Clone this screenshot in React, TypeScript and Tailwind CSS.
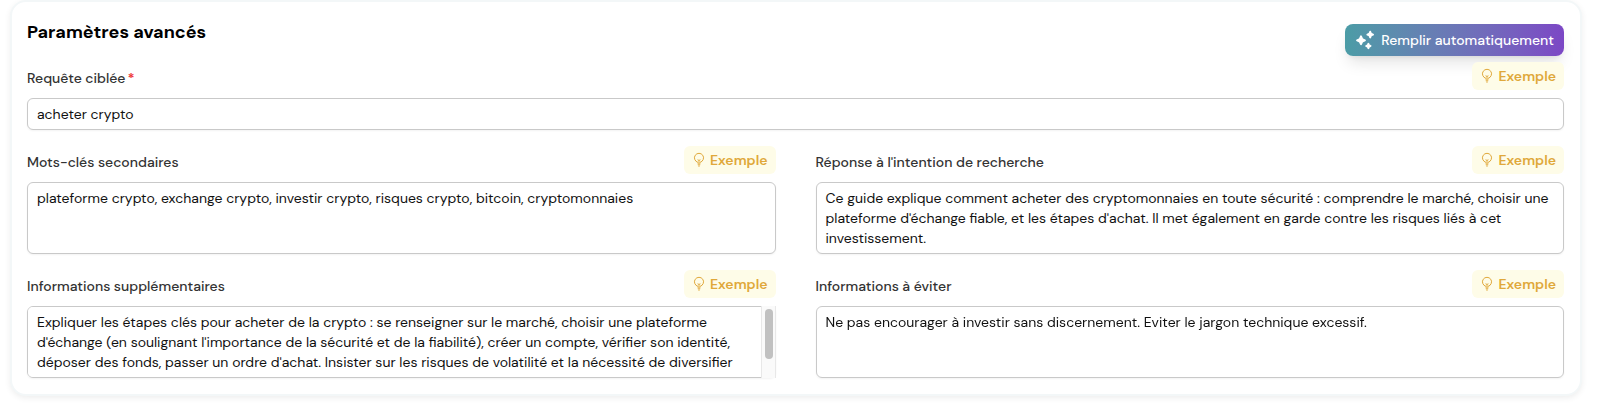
import { useId, useState } from 'react'
import type { ReactNode } from 'react'

const CONTROL = 'block w-full rounded-md border border-[#c9c9c9] bg-white py-[5px] pl-[9px] text-sm leading-5 text-[#111] shadow-xs outline-none focus:border-[#4b9ca6]'

function SparklesIcon() {
  return (
    <svg viewBox="0 0 20 20" className="size-5 shrink-0" fill="currentColor" stroke="currentColor" strokeWidth="2" strokeLinejoin="round" aria-hidden="true">
      <path d="M6 6.4l1.2 2.7L9.9 10.3 7.2 11.5 6 14.2 4.8 11.5 2.1 10.3 4.8 9.1z" />
      <path d="M15.2 1.8l.8 2 2 .8-2 .8-.8 2-.8-2-2-.8 2-.8z" />
      <path d="M13.4 13.9l.6 1.5 1.5.6-1.5.6-.6 1.5-.6-1.5-1.5-.6 1.5-.6z" />
    </svg>
  )
}

function BulbIcon() {
  return (
    <svg viewBox="0 0 12 16" className="h-4 w-3 shrink-0" fill="none" stroke="currentColor" strokeLinecap="round" strokeLinejoin="round" aria-hidden="true">
      <path d="M4.6 10.3a4.6 4.6 0 1 1 2.8 0" strokeWidth="1" />
      <path d="M4.9 7.9 6 8.4l1.1-.5M6 8.4v2.4" strokeWidth="0.9" />
      <path d="M4.9 11.2h2.2M5.1 12.7h1.8M5.5 14h1" strokeWidth="0.9" />
    </svg>
  )
}

function ExampleButton() {
  return (
    <button type="button" className="flex h-7 items-center gap-[5px] rounded-md bg-yellow-50 px-2 pl-[9px] text-sm font-semibold text-[#e0a83a]">
      <BulbIcon />
      Exemple
    </button>
  )
}

function Field({ id, label, required, children }: {
  id: string
  label: string
  required?: boolean
  children: ReactNode
}) {
  return (
    <div className="flex min-w-0 flex-col gap-2">
      <div className="flex items-end justify-between">
        <label htmlFor={id} className="text-sm leading-6 font-medium text-[#333]">
          {label}
          {required && <span className="ml-0.5 font-bold text-[#ee3a3a]">*</span>}
        </label>
        <ExampleButton />
      </div>
      {children}
    </div>
  )
}

function TextAreaField({ label, initial, scrollable }: {
  label: string
  initial: string
  scrollable?: boolean
}) {
  const id = useId()
  const [value, setValue] = useState(initial)
  const [scroll, setScroll] = useState(0)
  return (
    <Field id={id} label={label}>
      <div className="relative">
        <textarea id={id} rows={3} value={value}
          onChange={e => setValue(e.target.value)}
          onScroll={e => setScroll(e.currentTarget.scrollTop)}
          className={`${CONTROL} ${scrollable ? 'pr-6' : 'pr-[9px]'} resize-none [scrollbar-width:none]`} />
        {scrollable && (
          <div className="pointer-events-none absolute inset-y-0 right-0 w-[15px] border-x border-[#e8e8e8] bg-[#fafafa] px-[3px] pt-[3px]">
            <div className="h-[50px] w-2 rounded-full bg-[#c1c1c1]"
              style={{ transform: `translateY(${Math.min(scroll, 16)}px)` }} />
          </div>
        )}
      </div>
    </Field>
  )
}

export default function App() {
  const [query, setQuery] = useState('acheter crypto')

  return (
    <div className="bg-white pr-5 pb-4 pl-2.5 font-['DM_Sans',Inter,sans-serif]">
      <section className="rounded-2xl border-2 border-[#f3f7f8] bg-white p-4 pl-[15px] shadow-[0_2px_6px_rgba(0,0,0,0.07)]">
        <header className="flex items-start justify-between pb-1.5">
          <h2 className="text-lg leading-7 font-bold text-black">Paramètres avancés</h2>
          <button type="button" className="mt-1.5 flex h-8 items-center gap-1.5 rounded-lg bg-linear-to-r from-[#4b9ca6] to-[#7c47c5] px-2.5 text-sm font-medium text-white shadow-lg">
            <SparklesIcon />
            Remplir automatiquement
          </button>
        </header>

        <div className="flex flex-col gap-4">
          <Field id="query" label="Requête ciblée" required>
            <input id="query" type="text" required value={query}
              onChange={e => setQuery(e.target.value)} className={`${CONTROL} pr-[9px]`} />
          </Field>
          <div className="grid grid-cols-2 gap-x-10 gap-y-4">
            <TextAreaField label="Mots-clés secondaires"
              initial="plateforme crypto, exchange crypto, investir crypto, risques crypto, bitcoin, cryptomonnaies" />
            <TextAreaField label="Réponse à l'intention de recherche"
              initial="Ce guide explique comment acheter des cryptomonnaies en toute sécurité : comprendre le marché, choisir une plateforme d'échange fiable, et les étapes d'achat. Il met également en garde contre les risques liés à cet investissement." />
            <TextAreaField label="Informations supplémentaires" scrollable
              initial="Expliquer les étapes clés pour acheter de la crypto : se renseigner sur le marché, choisir une plateforme d'échange (en soulignant l'importance de la sécurité et de la fiabilité), créer un compte, vérifier son identité, déposer des fonds, passer un ordre d'achat. Insister sur les risques de volatilité et la nécessité de diversifier ses investissements." />
            <TextAreaField label="Informations à éviter"
              initial="Ne pas encourager à investir sans discernement. Eviter le jargon technique excessif." />
          </div>
        </div>
      </section>
    </div>
  )
}
